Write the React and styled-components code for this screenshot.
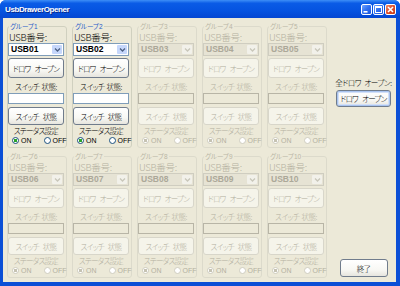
import styled, { createGlobalStyle } from "styled-components";

const GlobalStyle = createGlobalStyle`
  html, body {
    margin: 0;
    padding: 0;
    background: #ffffff;
  }
  #root {
    width: 400px;
    height: 286px;
  }
`;

const Window = styled.div`
  width: 400px;
  height: 286px;
  box-sizing: border-box;
  display: flex;
  flex-direction: column;
  background: #0b4fd6;
  border-radius: 6px 6px 0 0;
  overflow: hidden;
  font-family: "Noto Sans CJK JP", "Liberation Sans", sans-serif;
  font-weight: 300;
  font-feature-settings: "palt";
`;

const TitleBar = styled.div`
  height: 18px;
  flex: none;
  display: flex;
  align-items: center;
  padding: 0 4px 0 5px;
  background: linear-gradient(180deg, #3d8ef7 0%, #0a5be6 18%, #0553e0 60%, #0447d2 100%);
`;

const Title = styled.div`
  flex: 1;
  color: #ffffff;
  font-family: "Liberation Sans", Arial, sans-serif;
  font-weight: bold;
  font-size: 8px;
  letter-spacing: -0.4px;
  text-shadow: 1px 1px 0 #0a2a8a;
`;

const Caps = styled.div`
  display: flex;
  gap: 1px;
`;

const CapButton = styled.div`
  width: 11px;
  height: 11px;
  box-sizing: border-box;
  border: 1px solid #ffffff;
  border-radius: 2px;
  background: ${(p) =>
    p.$close
      ? "linear-gradient(135deg, #f08a6a 0%, #e0502c 50%, #c23a16 100%)"
      : "linear-gradient(135deg, #6fa4ff 0%, #2f6ff0 50%, #1b55dc 100%)"};
  display: flex;
  align-items: center;
  justify-content: center;
`;

const Client = styled.div`
  flex: 1;
  display: flex;
  margin: 0 4px 4px 3px;
  padding: 4px 0 4px 4px;
  background: #ece9d8;
  min-height: 0;
`;

const GroupGrid = styled.div`
  display: grid;
  grid-template-columns: repeat(5, 60px);
  grid-template-rows: repeat(2, 126px);
  gap: 4px 5px;
`;

const Group = styled.fieldset`
  margin: 0;
  padding: 0 2px 0 0;
  min-width: 0;
  border: 1px solid ${(p) => (p.disabled ? "#dcdacb" : "#d0d0bf")};
  border-radius: 3px;
  display: flex;
  flex-direction: column;
  color: ${(p) => (p.disabled ? "#b3b0a0" : "#000000")};
`;

const Legend = styled.legend`
  display: flex;
  font-size: 6.5px;
  font-weight: 400;
  line-height: 9px;
  height: 9px;
  padding: 0 1px;
  margin-left: 1px;
  white-space: nowrap;
  color: ${(p) => (p.$off ? "#b9b6a6" : "#2a5cc8")};
`;

const LegendNum = styled.span`
  font-family: "Liberation Sans", Arial, sans-serif;
`;

const FieldLabel = styled.div`
  height: 12px;
  line-height: 12px;
  font-size: 9.5px;
  padding-left: 1px;
  letter-spacing: -0.3px;
`;

const Select = styled.div`
  height: 13px;
  box-sizing: border-box;
  display: flex;
  align-items: stretch;
  border: 1px solid ${(p) => (p.$off ? "#cfcdc0" : "#7f9db9")};
  background: ${(p) => (p.$off ? "#e6e3d4" : "#ffffff")};
`;

const SelectValue = styled.div`
  flex: 1;
  padding-left: 2px;
  font-family: "Liberation Sans", Arial, sans-serif;
  font-weight: bold;
  font-size: 8.5px;
  line-height: 11px;
  color: ${(p) => (p.$off ? "#aca899" : "#000000")};
`;

const SelectArrow = styled.div`
  width: 10px;
  margin: 1px;
  border-radius: 1px;
  background: ${(p) => (p.$off ? "#f2f1ea" : "#c6d7fb")};
  display: flex;
  align-items: center;
  justify-content: center;
`;

const Button = styled.button`
  display: flex;
  align-items: center;
  justify-content: center;
  box-sizing: border-box;
  width: ${(p) => p.$w || "56px"};
  height: ${(p) => p.$h || "20px"};
  margin: ${(p) => p.$m || "0"};
  padding: 0;
  font-family: inherit;
  font-weight: 300;
  font-feature-settings: "palt";
  font-size: 7.5px;
  letter-spacing: -0.7px;
  word-spacing: 3px;
  white-space: nowrap;
  color: #000000;
  border: 1px solid #707c8c;
  border-radius: 3px;
  background: linear-gradient(180deg, #ffffff 0%, #f8f8f4 60%, #e6e5de 100%);
  box-shadow: ${(p) => (p.$focus ? "inset 0 0 0 1px #a8c3ef, inset 0 0 0 2px #d3e0f7" : "none")};

  &:disabled {
    color: #b3b0a0;
    border-color: #d8d6ca;
    background: #f5f4ea;
  }
`;

const Caption = styled.div`
  height: 12px;
  margin-top: 3px;
  line-height: 12px;
  font-size: 7.5px;
  letter-spacing: -0.5px;
  word-spacing: 1px;
  text-align: center;
  white-space: nowrap;
`;

const TextBox = styled.div`
  height: 11px;
  box-sizing: border-box;
  border: 1px solid ${(p) => (p.$off ? "#b8b5a6" : "#7f9db9")};
  background: ${(p) => (p.$off ? "#ece9d8" : "#ffffff")};
`;

const StatusLabel = styled.div`
  height: 10px;
  margin-top: 1px;
  line-height: 10px;
  font-size: 7.5px;
  letter-spacing: -0.7px;
  text-align: center;
`;

const RadioRow = styled.div`
  height: 9px;
  display: flex;
  align-items: center;
  padding-left: 4px;
  gap: 12px;
`;

const RadioItem = styled.div`
  display: flex;
  align-items: center;
  gap: 2px;
  font-family: "Liberation Sans", Arial, sans-serif;
  font-weight: normal;
  font-size: 7px;
`;

const RadioDot = styled.span`
  width: 7px;
  height: 7px;
  box-sizing: border-box;
  border-radius: 50%;
  border: 1px solid ${(p) => (p.$off ? "#cfcdc0" : "#1c5180")};
  background: ${(p) =>
    p.$on
      ? `radial-gradient(circle, ${p.$off ? "#c6c3b3" : "#2aa52a"} 0 1.6px, #ffffff 2px)`
      : "#ffffff"};
`;

const Side = styled.div`
  width: 65px;
  margin-left: 4px;
  display: flex;
  flex-direction: column;
  align-items: center;
  padding-top: 55px;
`;

const SideLabel = styled.div`
  height: 12px;
  line-height: 12px;
  font-size: 7.5px;
  letter-spacing: -0.4px;
  word-spacing: 2px;
  white-space: nowrap;
  color: #000000;
`;

const groups = Array.from({ length: 10 }, (_, i) => ({
  n: i + 1,
  usb: `USB${String(i + 1).padStart(2, "0")}`,
  on: i < 2,
}));

function Arrow({ off }) {
  return (
    <svg width="7" height="6" viewBox="0 0 7 6">
      <path d="M1 1.5 L3.5 4 L6 1.5" fill="none" stroke={off ? "#c9c7ba" : "#4d6185"} strokeWidth="1.3" />
    </svg>
  );
}

function UsbGroup({ g }) {
  const off = !g.on;
  return (
    <Group disabled={off}>
      <Legend $off={off}>
        グループ<LegendNum>{g.n}</LegendNum>
      </Legend>
      <FieldLabel>USB番号:</FieldLabel>
      <Select $off={off}>
        <SelectValue $off={off}>{g.usb}</SelectValue>
        <SelectArrow $off={off}>
          <Arrow off={off} />
        </SelectArrow>
      </Select>
      <Button disabled={off} $m="2px 0 0 0">ドロワ オープン</Button>
      <Caption>スイッチ 状態:</Caption>
      <TextBox $off={off} />
      <Button disabled={off} $h="18px" $m="3px 0 0 0">スイッチ 状態</Button>
      <StatusLabel>ステータス設定</StatusLabel>
      <RadioRow>
        <RadioItem>
          <RadioDot $on $off={off} />
          ON
        </RadioItem>
        <RadioItem>
          <RadioDot $off={off} />
          OFF
        </RadioItem>
      </RadioRow>
    </Group>
  );
}

export default function App() {
  return (
    <>
      <GlobalStyle />
      <Window>
        <TitleBar>
          <Title>UsbDrawerOpener</Title>
          <Caps>
            <CapButton>
              <svg width="9" height="9" viewBox="0 0 9 9">
                <rect x="1.5" y="6" width="4" height="1.6" fill="#fff" />
              </svg>
            </CapButton>
            <CapButton>
              <svg width="9" height="9" viewBox="0 0 9 9">
                <rect x="1.5" y="1.5" width="6" height="6" fill="none" stroke="#fff" strokeWidth="1" />
                <rect x="1.5" y="1.5" width="6" height="1.5" fill="#fff" />
              </svg>
            </CapButton>
            <CapButton $close>
              <svg width="9" height="9" viewBox="0 0 9 9">
                <path d="M2 2 L7 7 M7 2 L2 7" stroke="#fff" strokeWidth="1.6" />
              </svg>
            </CapButton>
          </Caps>
        </TitleBar>
        <Client>
          <GroupGrid>
            {groups.map((g) => (
              <UsbGroup key={g.n} g={g} />
            ))}
          </GroupGrid>
          <Side>
            <SideLabel>全ドロワ オープン:</SideLabel>
            <Button $w="55px" $h="17px" $m="1px 0 0 0" $focus>ドロワ オープン</Button>
            <Button $w="48px" $h="18px" $m="auto 0 1px 0">終了</Button>
          </Side>
        </Client>
      </Window>
    </>
  );
}
